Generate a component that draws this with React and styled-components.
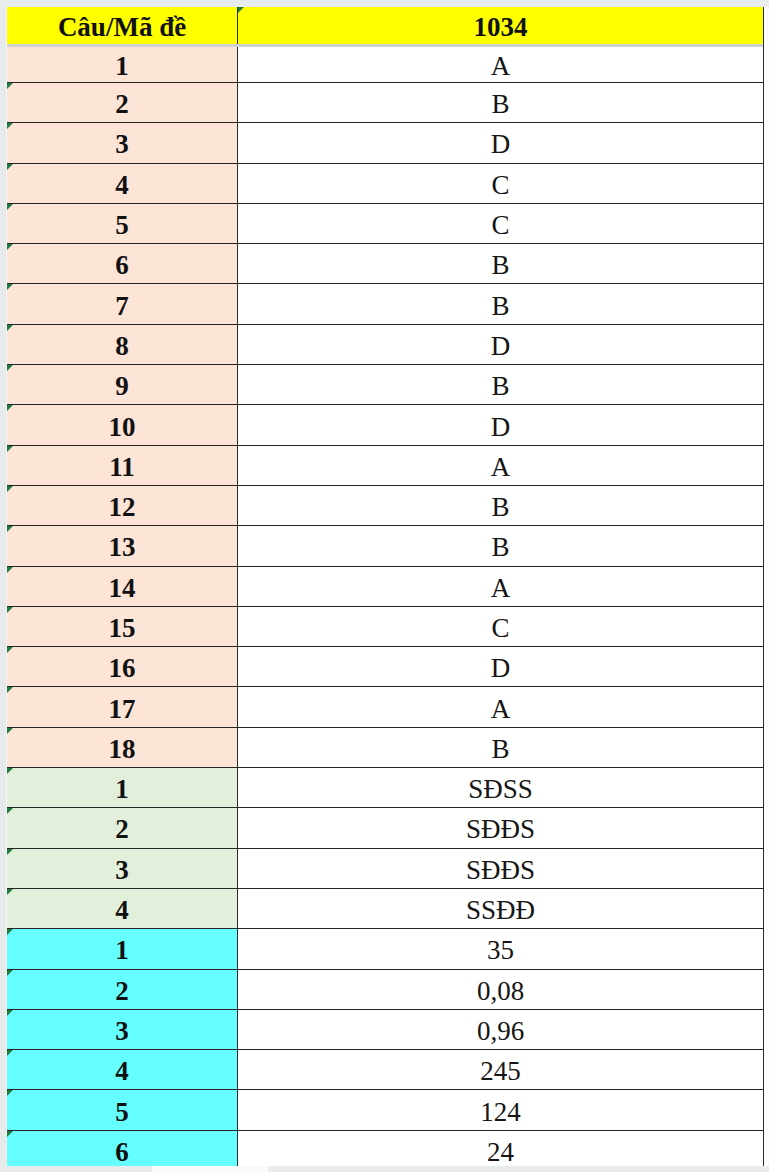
import React from "react";
import styled, { createGlobalStyle } from "styled-components";

const GlobalStyle = createGlobalStyle`
  html, body {
    margin: 0;
    padding: 0;
    background: #fff;
  }
  body {
    font-family: "Liberation Serif", "Times New Roman", serif;
    overflow: hidden;
  }
`;

const PEACH = "#fce4d6";
const GREEN = "#e2efda";
const CYAN = "#66ffff";

const answers = [
  ...["A", "B", "D", "C", "C", "B", "B", "D", "B", "D", "A", "B", "B", "A", "C", "D", "A", "B"].map(
    (v, i) => ({ key: i + 1, value: v, bg: PEACH })
  ),
  ...["SĐSS", "SĐĐS", "SĐĐS", "SSĐĐ"].map((v, i) => ({ key: i + 1, value: v, bg: GREEN })),
  ...["35", "0,08", "0,96", "245", "124", "24"].map((v, i) => ({ key: i + 1, value: v, bg: CYAN })),
];

const App = () => {
  return (
    <>
      <GlobalStyle />
      <Sheet>
        <TopBand />
        <Middle>
          <Gutter />
          <Table>
            <Header>
              <HeadCell $divider>Câu/Mã đề</HeadCell>
              <HeadCell $mark>1034</HeadCell>
            </Header>
            {answers.map((row, i) => (
              <Row key={i} $first={i === 0}>
                <KeyCell $bg={row.bg} $mark={i > 0}>{row.key}</KeyCell>
                <ValCell>{row.value}</ValCell>
              </Row>
            ))}
          </Table>
          <RightSpace />
        </Middle>
        <BottomBand>
          <BandPiece $w={152} />
          <BandPiece $w={116} $light />
          <BandPiece $w={501} />
        </BottomBand>
      </Sheet>
    </>
  );
};

const Sheet = styled.div`
  width: 769px;
  height: 1172px;
  overflow: hidden;
  display: flex;
  flex-direction: column;
  background: #fff;
`;

const TopBand = styled.div`
  height: 7px;
  flex: none;
  background: #e9ecec;
`;

const Middle = styled.div`
  flex: 1;
  display: flex;
  min-height: 0;
`;

const Gutter = styled.div`
  width: 6px;
  flex: none;
  background: #e6eaea;
  border-right: 1px solid #f6f7f7;
`;

const Table = styled.div`
  width: 756px;
  flex: none;
  border-right: 1.5px solid #2b2b2b;
  overflow: hidden;
  display: flex;
  flex-direction: column;
`;

const RightSpace = styled.div`
  flex: 1;
  background: #fbfbfb;
`;

const Header = styled.div`
  height: 40px;
  flex: none;
  box-sizing: border-box;
  display: grid;
  grid-template-columns: 231px 1fr;
  border-bottom: 3px solid #cdd0d0;
`;

const HeadCell = styled.div`
  position: relative;
  background: #ffff00;
  display: flex;
  align-items: center;
  justify-content: center;
  font-weight: bold;
  font-size: 27px;
  color: #111;
  padding-top: 3px;
  border-right: ${(p) => (p.$divider ? "1.5px solid #2b2b2b" : "none")};
  &::before {
    content: "";
    display: ${(p) => (p.$mark ? "block" : "none")};
    position: absolute;
    top: 0;
    left: 0;
    border-top: 6px solid #1f7a3c;
    border-right: 6px solid transparent;
  }
`;

const Row = styled.div`
  height: ${(p) => (p.$first ? "35px" : "40.3px")};
  flex: none;
  box-sizing: border-box;
  display: grid;
  grid-template-columns: 231px 1fr;
  border-top: ${(p) => (p.$first ? "none" : "1.5px solid #262626")};
`;

const KeyCell = styled.div`
  position: relative;
  background: ${(p) => p.$bg};
  border-right: 1.5px solid #2b2b2b;
  display: flex;
  align-items: center;
  justify-content: center;
  font-weight: bold;
  font-size: 27px;
  color: #111;
  padding-top: 4px;
  &::before {
    content: "";
    display: ${(p) => (p.$mark ? "block" : "none")};
    position: absolute;
    top: 0;
    left: 0;
    border-top: 6px solid #1f7a3c;
    border-right: 6px solid transparent;
  }
`;

const ValCell = styled.div`
  background: #fff;
  display: flex;
  align-items: center;
  justify-content: center;
  font-size: 27px;
  color: #151515;
  padding-top: 4px;
`;

const BottomBand = styled.div`
  height: 6px;
  flex: none;
  display: flex;
`;

const BandPiece = styled.div`
  width: ${(p) => p.$w}px;
  background: ${(p) => (p.$light ? "#fafafa" : "#e9ecec")};
`;

export default App;
